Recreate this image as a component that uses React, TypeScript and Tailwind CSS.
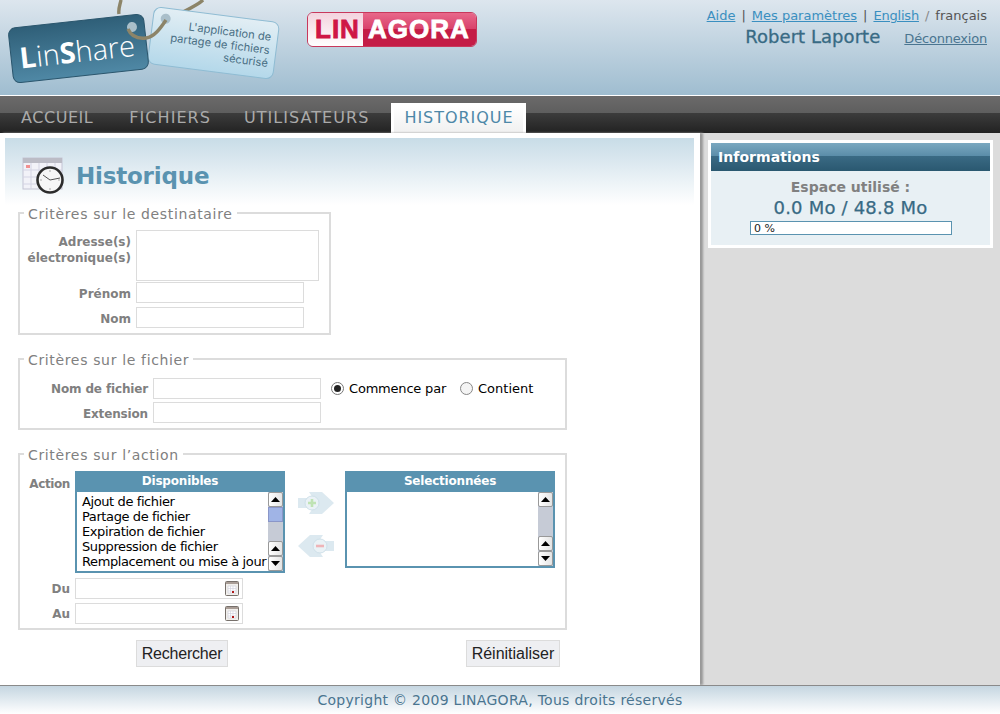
import type { ReactNode } from 'react'

const labelCls = 'text-right font-bold text-[#808080] text-[12px] leading-[15px]'
const inputCls = 'h-[21px] w-[168px] border border-[#dcdcdc] bg-white'

function Legend({ children }: { children: ReactNode }) {
  return <legend className="ml-[4px] px-[4px] pt-[3px] text-[14px] leading-[17px] text-[#808080] tracking-[0.65px]">{children}</legend>
}

function Scrollbar({ thumb }: { thumb?: boolean }) {
  const arrow = 'flex h-[15px] w-[15px] items-center justify-center rounded-[2px] border border-[#999] bg-gradient-to-r from-white to-[#e4e4e4] text-black'
  const up = <svg width="9" height="5" viewBox="0 0 9 5"><path d="M4.5 0 9 5H0z" fill="#000" /></svg>
  const down = <svg width="9" height="5" viewBox="0 0 9 5"><path d="M0 0h9L4.5 5z" fill="#000" /></svg>
  return (
    <div className="flex w-[15px] flex-col self-stretch bg-[#c6cbd6]">
      <div className={arrow}>{up}</div>
      {thumb ? <div className="h-[15px] border border-[#8a96c8] bg-[#a0b4e6]" /> : null}
      <div className="flex-1" />
      <div className={arrow}>{up}</div>
      <div className={arrow}>{down}</div>
    </div>
  )
}

function CalendarIcon() {
  return (
    <svg width="15" height="15" viewBox="0 0 15 15" className="mr-[2px]">
      <rect x="0.5" y="0.5" width="13" height="14" rx="1" fill="#f1efec" stroke="#77706b" />
      <rect x="1" y="1" width="12" height="2" fill="#a99d96" />
      <path d="M3 5h8v7H3z" fill="#fff" stroke="#c9c9d6" strokeWidth="0.6" />
      <path d="M5.5 5v7M8 5v7M3 7.5h8M3 10h8" stroke="#cfcfdc" strokeWidth="0.6" />
      <rect x="7" y="10" width="2" height="2" fill="#b01818" />
    </svg>
  )
}

function ArrowIcon({ dir }: { dir: 'add' | 'remove' }) {
  const add = dir === 'add'
  return (
    <svg width="36" height="24" viewBox="0 0 36 24" className="block">
      <path
        d={add ? 'M0 7h15l-4-6h13l12 11-12 11H11l4-6H0z' : 'M36 7H21l4-6H12L0 12l12 11h13l-4-6h15z'}
        fill="#dce9f0"
      />
      <circle cx={add ? 14 : 22} cy="12" r="7" fill="#eaf2f6" stroke="#cfe0e9" />
      <path d={add ? 'M10 12h8M14 8v8' : 'M18 12h8'} stroke={add ? '#bfe3b4' : '#eeb4b8'} strokeWidth="2.6" />
    </svg>
  )
}

function LinShareLogo() {
  return (
    <svg width="290" height="95" viewBox="0 0 290 95" className="block">
      <defs>
        <linearGradient id="tagDark" x1="0" y1="0" x2="0" y2="1">
          <stop offset="0" stopColor="#2f5f78" />
          <stop offset="1" stopColor="#4f88a5" />
        </linearGradient>
        <linearGradient id="tagLight" x1="0" y1="0" x2="0" y2="1">
          <stop offset="0" stopColor="#e2eef4" />
          <stop offset="1" stopColor="#b4d8ea" />
        </linearGradient>
      </defs>
      <path d="M121 0c-1 5-3 9-2 14M203 0c-4 4-12 8-20 12" fill="none" stroke="#8c8468" strokeWidth="3.4" />
      <g transform="rotate(7.3 213.5 43)">
        <rect x="150.5" y="14.5" width="126" height="57" rx="7" fill="url(#tagLight)" stroke="#8fbcd3" />
        <circle cx="163" cy="25" r="5" fill="#a9bfca" />
        <text x="270" y="33.7" textAnchor="end" fontFamily="Inter, Arial, sans-serif" fontSize="11.2" fill="#4a6f84">L'application de</text>
        <text x="270" y="47" textAnchor="end" fontFamily="Inter, Arial, sans-serif" fontSize="11.2" fill="#4a6f84">partage de fichiers</text>
        <text x="270" y="60" textAnchor="end" fontFamily="Inter, Arial, sans-serif" fontSize="11.2" fill="#4a6f84">sécurisé</text>
      </g>
      <g transform="rotate(-6.3 78.5 48.5)">
        <rect x="10.5" y="21" width="136" height="55" rx="7" fill="url(#tagDark)" stroke="#2b566d" />
        <circle cx="134" cy="33" r="5" fill="#a9bfca" />
        <text x="19" y="62" fontFamily="'Open Sans', Arial, sans-serif" fontSize="29" fontWeight="300" fill="#fff">
          <tspan fontWeight="700">L</tspan>in<tspan fontWeight="700">S</tspan>hare
        </text>
      </g>
      <path d="M128 29c3 7 9 10 18 9 8-1 14-9 20-18" fill="none" stroke="#8c8468" strokeWidth="3.4" />
    </svg>
  )
}

function LinagoraLogo() {
  return (
    <div className="flex h-[35px] w-[170px] overflow-hidden rounded-[6px] border border-[#c8385c] font-['Liberation_Sans',Arial,sans-serif] text-[26px] font-bold leading-[33px] tracking-[1px] [-webkit-text-stroke:0.8px_currentColor]">
      <div className="w-[55px] bg-gradient-to-b from-[#f3d3de] to-white pl-[7px] text-[#cf1745]">LIN</div>
      <div className="flex-1 bg-[linear-gradient(#e8688a_0,#d8406a_50%,#c41c46_50%,#c41c46_100%)] pl-[5px] text-white">AGORA</div>
    </div>
  )
}

function DualBox({ title, items, thumb, h }: { title: string; items: string[]; thumb?: boolean; h: string }) {
  return (
    <div className={`w-[210px] border-2 border-t-0 border-[#5a93b0] bg-white ${h} flex flex-col`}>
      <div className="-mx-[2px] h-[21px] bg-[#5a93b0] text-center text-[12px] font-bold leading-[21px] tracking-[-0.2px] text-white">{title}</div>
      <div className="flex flex-1 overflow-hidden">
        <ul className="min-w-0 flex-1 overflow-hidden whitespace-nowrap pl-[5px] pt-[2px] text-[13px] leading-[15px] tracking-[-0.4px] text-black">
          {items.map((it) => <li key={it}>{it}</li>)}
        </ul>
        <Scrollbar thumb={thumb} />
      </div>
    </div>
  )
}

export default function App() {
  return (
    <div className="flex h-[714px] w-[1000px] flex-col overflow-hidden bg-white font-['DejaVu_Sans',Verdana,sans-serif] text-[13px]">
      <header className="flex h-[95px] shrink-0 justify-between bg-gradient-to-b from-[#dde6ee] to-[#9fbdd0]">
        <div className="flex">
          <LinShareLogo />
          <div className="ml-[17px] pt-[12px]"><LinagoraLogo /></div>
        </div>
        <div className="pr-[13px] pt-[8px] text-right">
          <div className="text-[13px] leading-[15px] text-[#555]">
            <a className="text-[#3a8fc0] underline">Aide</a>
            <span className="mx-[6px]">|</span>
            <a className="text-[#3a8fc0] underline">Mes paramètres</a>
            <span className="mx-[6px]">|</span>
            <a className="text-[#3a8fc0] underline tracking-[-0.2px]">English</a>
            <span className="mx-[6px] text-[#888]">/</span>
            <span>français</span>
          </div>
          <div className="mt-[3px] flex items-baseline justify-end">
            <span className="text-[18px] font-normal leading-[22px] tracking-[0.05px] text-[#386a84] [-webkit-text-stroke:0.3px_#386a84]">Robert Laporte</span>
            <a className="ml-[24px] text-[13px] tracking-[-0.2px] text-[#4a7590] underline">Déconnexion</a>
          </div>
        </div>
      </header>

      <nav className="mt-[1px] flex h-[37px] shrink-0 items-end bg-[linear-gradient(#6b6a6a_0,#5e5e5e_46%,#3c3c3c_46%,#222_100%)] pl-[4px] text-[16px] leading-[30px] text-[#aaa]">
        <a className="pl-[17px] pr-[19px] tracking-[0.55px]">ACCUEIL</a>
        <a className="pl-[17px] pr-[17px] tracking-[1.05px]">FICHIERS</a>
        <a className="pl-[16px] pr-[20px] tracking-[1.05px]">UTILISATEURS</a>
        <a className="ml-[2px] h-[30px] border-[3px] border-b-0 border-white bg-gradient-to-b from-white to-[#f0f0f0] px-[10px] leading-[24px] tracking-[0.95px] text-[#4d88a8]">HISTORIQUE</a>
      </nav>

      <div className="flex min-h-0 flex-1 bg-[#dcdcdc]">
        <main className="w-[700px] shrink-0 bg-white pt-[5px] shadow-[3px_0_2px_#999]">
          <div className="mx-[5px] flex h-[67px] w-[689px] items-center bg-gradient-to-b from-[#c8dce7] to-white pl-[17px] pt-[9px]">
            <svg width="44" height="40" viewBox="0 0 44 40">
              <rect x="1" y="2" width="39" height="31" fill="#f2f2f8" stroke="#c4c4d4" />
              <rect x="1" y="2" width="39" height="5" fill="#bcbcc6" />
              <path d="M9 7v26M17 7v26M25 7v26M33 7v26M1 14h39M1 21h39M1 28h39" stroke="#d4d4e4" />
              <rect x="4" y="9" width="4" height="3" fill="#f09090" />
              <circle cx="28" cy="24" r="12.5" fill="#f6f6f6" stroke="#2c2c2c" strokeWidth="2.6" />
              <path d="M28 24 21 19M28 24 38 22" stroke="#555" strokeWidth="1" />
              <path d="M28 14v2M28 32v2M18 24h2M36 24h2" stroke="#aaa" />
            </svg>
            <h1 className="ml-[10px] text-[23px] font-bold leading-none tracking-[-0.2px] text-[#5a93b0]">Historique</h1>
          </div>

          <fieldset className="ml-[18px] -mt-[2px] w-[313px] border-2 border-[#dcdcdc] pb-[5px]">
            <Legend>Critères sur le destinataire</Legend>
            <div className="mt-[7px] flex gap-[5px]">
              <div className={`${labelCls} w-[111px] pt-[4px] leading-[16px]`}>Adresse(s)<br />électronique(s)</div>
              <div className="h-[51px] w-[183px] border border-[#dcdcdc]" />
            </div>
            <div className="mt-[1px] flex items-center gap-[5px]">
              <div className={`${labelCls} w-[111px] pt-[3px]`}>Prénom</div>
              <div className={inputCls} />
            </div>
            <div className="mt-[4px] flex items-center gap-[5px]">
              <div className={`${labelCls} w-[111px] pt-[3px]`}>Nom</div>
              <div className={inputCls} />
            </div>
          </fieldset>

          <fieldset className="ml-[18px] mt-[14px] w-[549px] border-2 border-[#dcdcdc] pb-[5px]">
            <Legend>Critères sur le fichier</Legend>
            <div className="mt-[9px] flex items-center gap-[5px]">
              <div className={`${labelCls} w-[128px] pt-[2px] tracking-[-0.15px]`}>Nom de fichier</div>
              <div className={inputCls} />
              <div className="ml-[5px] flex items-center text-[13px] text-black">
                <span className="flex h-[13px] w-[13px] items-center justify-center rounded-full border border-[#777] bg-white"><span className="h-[7px] w-[7px] rounded-full bg-[#222]" /></span>
                <span className="ml-[5px] tracking-[-0.2px]">Commence par</span>
                <span className="ml-[14px] h-[13px] w-[13px] rounded-full border border-[#888] bg-[#f4f4f4]" />
                <span className="ml-[5px]">Contient</span>
              </div>
            </div>
            <div className="mt-[3px] flex items-center gap-[5px]">
              <div className={`${labelCls} w-[128px] pt-[3px] tracking-[-0.15px]`}>Extension</div>
              <div className={inputCls} />
            </div>
          </fieldset>

          <fieldset className="ml-[18px] mt-[14px] w-[549px] border-2 border-[#dcdcdc] pb-[4px]">
            <Legend>Critères sur l’action</Legend>
            <div className="mt-[7px] flex items-start gap-[5px]">
              <div className={`${labelCls} w-[50px] pt-[6px] tracking-[-0.4px]`}>Action</div>
              <DualBox
                title="Disponibles"
                h="h-[102px]"
                thumb
                items={['Ajout de fichier', 'Partage de fichier', 'Expiration de fichier', 'Suppression de fichier', 'Remplacement ou mise à jour']}
              />
              <div className="ml-[8px] mr-[6px] flex flex-col gap-[19px] pt-[20px]">
                <ArrowIcon dir="add" />
                <ArrowIcon dir="remove" />
              </div>
              <DualBox title="Selectionnées" h="h-[97px]" items={[]} />
            </div>
            <div className="mt-[5px] flex items-center gap-[5px]">
              <div className={`${labelCls} w-[50px] pt-[2px]`}>Du</div>
              <div className={`${inputCls} flex items-center justify-end`}><CalendarIcon /></div>
            </div>
            <div className="mt-[4px] flex items-center gap-[5px]">
              <div className={`${labelCls} w-[50px] pt-[2px]`}>Au</div>
              <div className={`${inputCls} flex items-center justify-end`}><CalendarIcon /></div>
            </div>
          </fieldset>

          <div className="mt-[10px] flex font-['Liberation_Sans',Arial,sans-serif] text-[16px] text-[#222]">
            <button className="ml-[136px] h-[27px] w-[92px] border border-[#dcdcdc] bg-[#eeeff2] tracking-[-0.2px]">Rechercher</button>
            <button className="ml-[238px] h-[27px] w-[94px] border border-[#dcdcdc] bg-[#eeeff2]">Réinitialiser</button>
          </div>
        </main>

        <aside className="ml-[8px] mt-[7px] h-[108px] w-[285px] border-[3px] border-white bg-[#e8f0f4]">
          <div className="h-[28px] bg-[linear-gradient(#7aa8c0_0,#5a8ca8_48%,#3a6a84_48%,#2a5870_100%)] pl-[7px] text-[14px] font-bold leading-[28px] tracking-[0.05px] text-white">Informations</div>
          <div className="pt-[8px] text-center">
            <div className="text-[14px] font-bold leading-[17px] text-[#808080]">Espace utilisé :</div>
            <div className="mt-[2px] text-[18px] font-normal leading-[20px] tracking-[0.2px] text-[#386a84] [-webkit-text-stroke:0.25px_#386a84]">0.0 Mo / 48.8 Mo</div>
            <div className="ml-[39px] mt-[3px] h-[14px] w-[202px] border border-[#5a93b0] bg-white pl-[3px] text-left text-[11px] leading-[13px] text-[#222]">0 %</div>
          </div>
        </aside>
      </div>

      <footer className="h-[29px] shrink-0 border-t border-[#8a8a8a] bg-gradient-to-b from-[#c5d6e1] to-white text-center text-[14px] leading-[28px] tracking-[0.28px] text-[#4a7590]">
        Copyright © 2009 LINAGORA, Tous droits réservés
      </footer>
    </div>
  )
}
